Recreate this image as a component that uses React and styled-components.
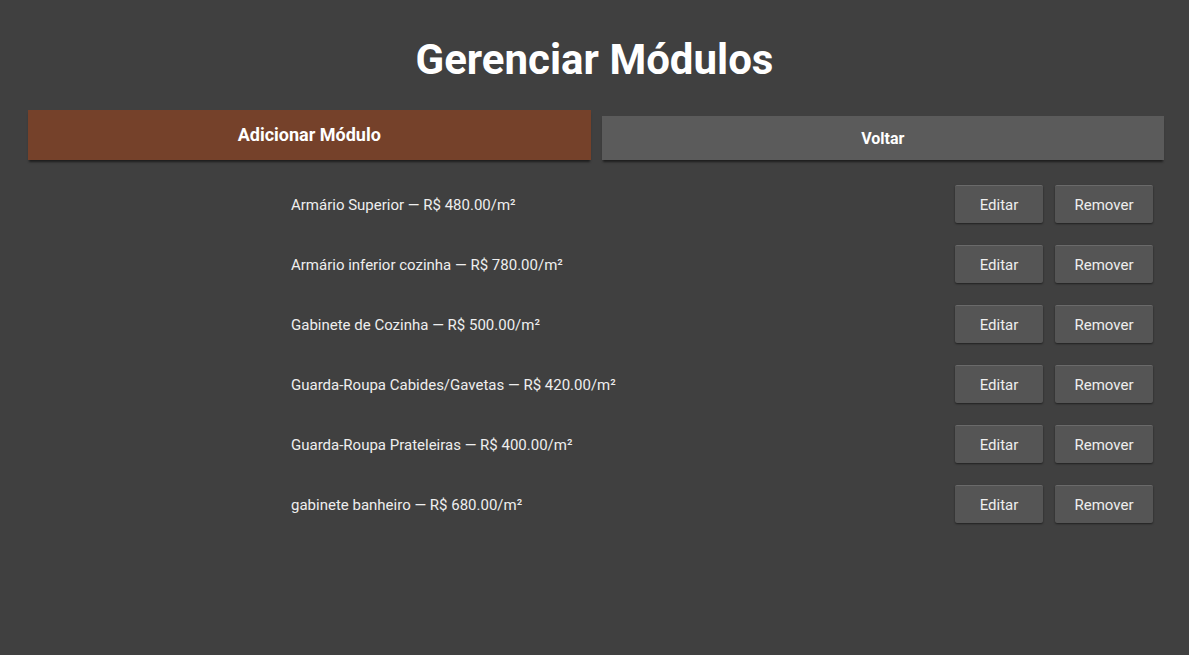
import React from 'react'
import styled, { createGlobalStyle } from 'styled-components'

const GlobalStyle = createGlobalStyle`
  html, body {
    margin: 0;
    padding: 0;
    background: #404040;
    font-family: Roboto, "Noto Sans", sans-serif;
    color: #fff;
  }
`

const Page = styled.div`
  min-height: 655px;
  background: #404040;
  padding-top: 36px;
  box-sizing: border-box;
`

const Title = styled.h1`
  margin: 0;
  text-align: center;
  font-size: 42px;
  font-weight: 700;
  line-height: 48px;
  color: #fff;
`

const Actions = styled.div`
  display: flex;
  align-items: flex-end;
  gap: 11px;
  margin: 26px 25px 0 28px;
`

const BigButton = styled.button`
  flex: 1;
  height: ${(p) => (p.primary ? '50px' : '44px')};
  border: none;
  background: ${(p) => (p.primary ? '#75412a' : '#5b5b5b')};
  color: #fff;
  font-family: Roboto, sans-serif;
  font-weight: 700;
  font-size: ${(p) => (p.primary ? '18px' : '16px')};
  padding: ${(p) => (p.primary ? '0 0 2px' : '0')};
  box-shadow: 0 3px 2px -1px #1e1e1e;
  cursor: pointer;
`

const List = styled.ul`
  list-style: none;
  margin: 14px 36px 0 291px;
  padding: 0;
`

const Row = styled.li`
  display: flex;
  align-items: center;
  height: 60px;
  gap: 12px;
`

const Label = styled.span`
  flex: 1;
  font-size: 15px;
  color: #eee;
  padding-top: 1px;
`

const SmallButton = styled.button`
  width: ${(p) => p.w}px;
  height: 38px;
  border: none;
  border-top: 1px solid #6a6a6a;
  border-radius: 2px;
  background: #555;
  color: #eee;
  font-family: Roboto, sans-serif;
  font-size: 15px;
  box-shadow: 0 1px 2px rgba(0, 0, 0, 0.5);
  cursor: pointer;
`

const modules = [
  { name: 'Armário Superior', price: '480.00' },
  { name: 'Armário inferior cozinha', price: '780.00' },
  { name: 'Gabinete de Cozinha', price: '500.00' },
  { name: 'Guarda-Roupa Cabides/Gavetas', price: '420.00' },
  { name: 'Guarda-Roupa Prateleiras', price: '400.00' },
  { name: 'gabinete banheiro', price: '680.00' },
]

const App = () => {
  return (
    <Page>
      <GlobalStyle />
      <Title>Gerenciar Módulos</Title>
      <Actions>
        <BigButton primary>Adicionar Módulo</BigButton>
        <BigButton>Voltar</BigButton>
      </Actions>
      <List>
        {modules.map((m) => (
          <Row key={m.name}>
            <Label>{m.name} — R$ {m.price}/m²</Label>
            <SmallButton w={88}>Editar</SmallButton>
            <SmallButton w={98}>Remover</SmallButton>
          </Row>
        ))}
      </List>
    </Page>
  )
}

export default App
